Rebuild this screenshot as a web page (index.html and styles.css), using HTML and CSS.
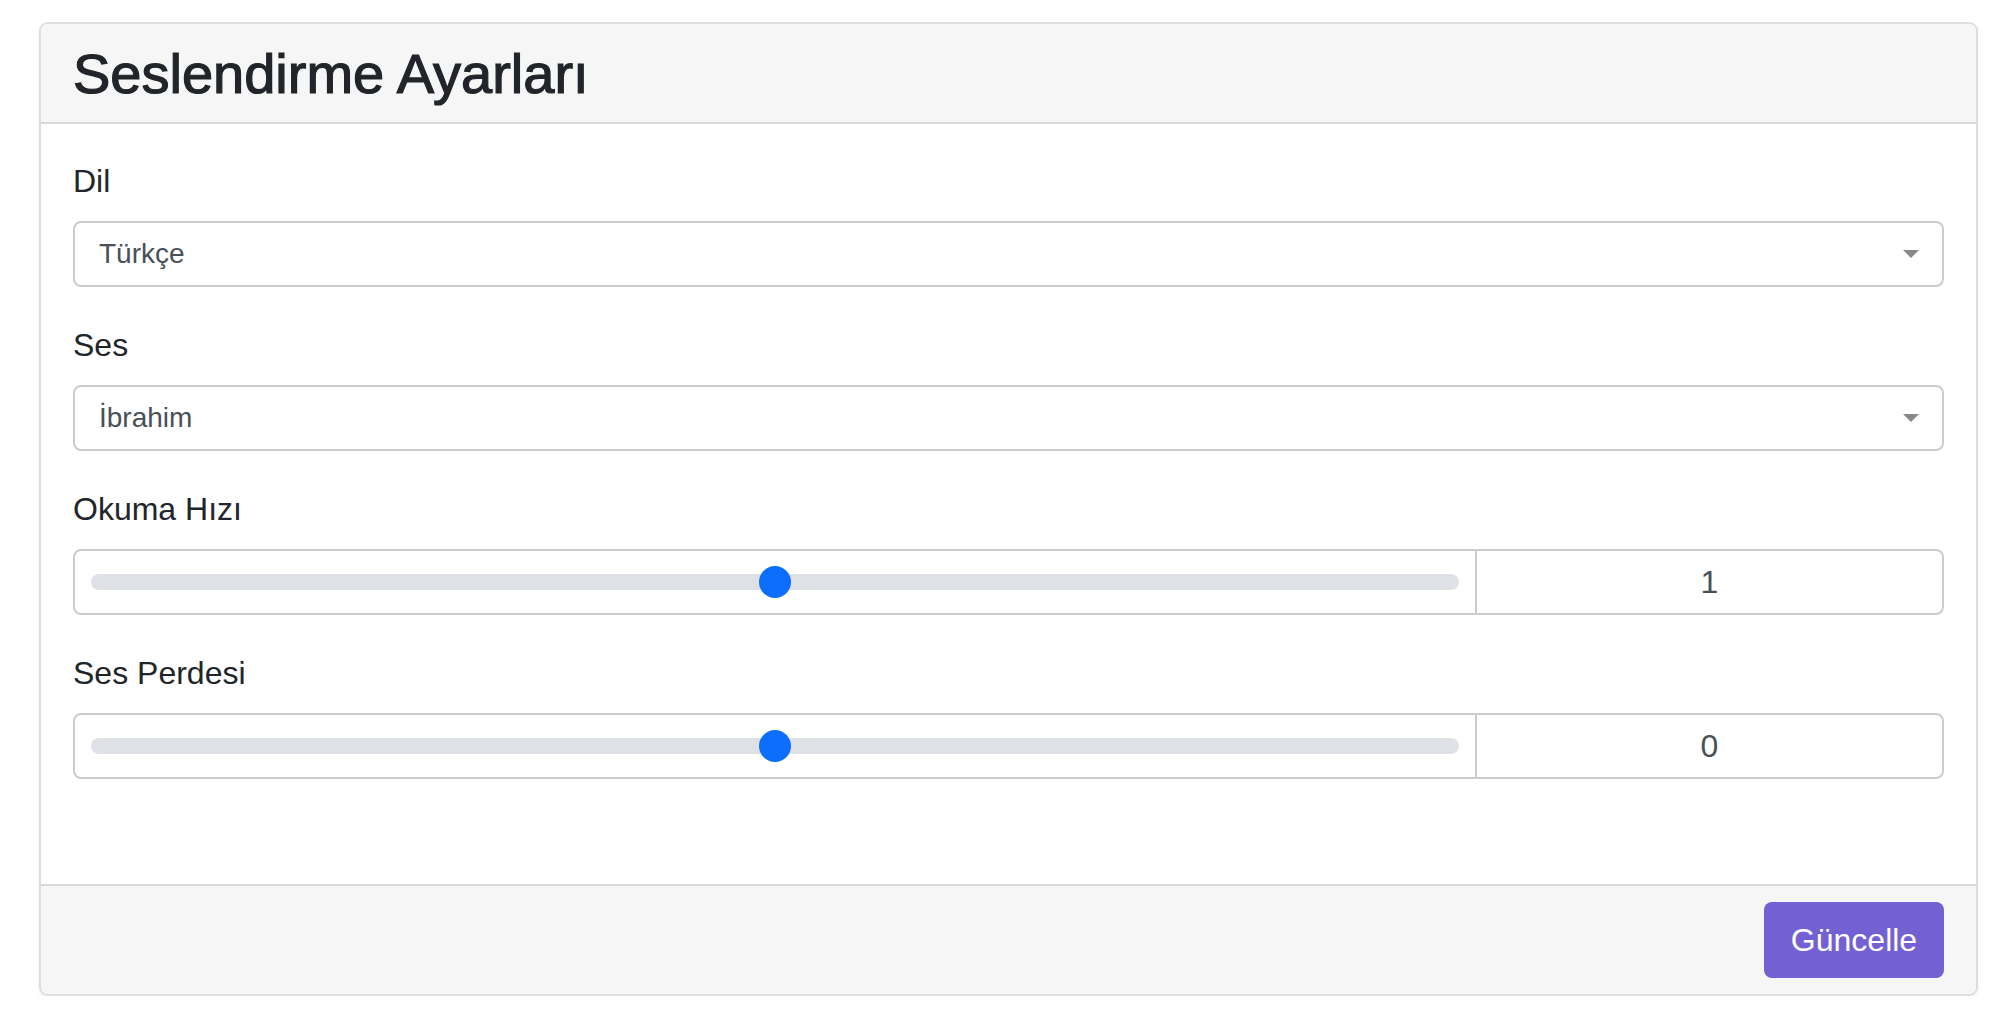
FILE: index.html
```html
<!DOCTYPE html>
<html lang="tr">
<head>
<meta charset="utf-8">
<title>Seslendirme Ayarları</title>
<link rel="stylesheet" href="styles.css">
</head>
<body>
<div class="page">
  <div class="card">
    <div class="card-header">
      <h3 class="card-title">Seslendirme Ayarları</h3>
    </div>
    <div class="card-body">
      <div class="form-group">
        <label class="form-label">Dil</label>
        <div class="select">
          <span class="select-value">Türkçe</span>
          <span class="select-arrow"></span>
        </div>
      </div>
      <div class="form-group">
        <label class="form-label">Ses</label>
        <div class="select">
          <span class="select-value">İbrahim</span>
          <span class="select-arrow"></span>
        </div>
      </div>
      <div class="form-group">
        <label class="form-label">Okuma Hızı</label>
        <div class="range-group">
          <div class="range-cell">
            <input class="range" type="range" min="0" max="2" step="0.1" value="1">
          </div>
          <div class="number-cell">1</div>
        </div>
      </div>
      <div class="form-group">
        <label class="form-label">Ses Perdesi</label>
        <div class="range-group">
          <div class="range-cell">
            <input class="range" type="range" min="-10" max="10" step="1" value="0">
          </div>
          <div class="number-cell">0</div>
        </div>
      </div>
    </div>
    <div class="card-footer">
      <button class="btn-update" type="button">Güncelle</button>
    </div>
  </div>
</div>
</body>
</html>
```

FILE: styles.css
```css
* {
  box-sizing: border-box;
}

html, body {
  margin: 0;
  padding: 0;
  background: #ffffff;
}

body {
  font-family: "Liberation Sans", Arial, sans-serif;
  color: #212529;
}

.page {
  padding: 22px 28px 0 39px;
}

.card {
  border: 2px solid #dedede;
  border-radius: 9px;
  box-shadow: 0 2px 4px rgba(0, 0, 0, 0.06);
  overflow: hidden;
  background: #ffffff;
}

.card-header {
  background: #f6f6f6;
  border-bottom: 2px solid #d9d9d9;
  padding: 16px 32px 15px;
}

.card-title {
  margin: 0;
  font-size: 56px;
  line-height: 67px;
  font-weight: 500;
  color: #212529;
  -webkit-text-stroke: 1.2px #212529;
}

.card-body {
  padding: 33px 32px 71px;
}

.form-group {
  margin-bottom: 34px;
}

.form-label {
  display: block;
  font-size: 32px;
  line-height: 48px;
  margin-bottom: 16px;
  color: #212529;
}

.select {
  height: 66px;
  border: 2px solid #cccccc;
  border-radius: 8px;
  display: flex;
  align-items: center;
  justify-content: space-between;
  padding: 0 23px 0 24px;
  background: #ffffff;
}

.select-value {
  font-size: 28px;
  color: #495057;
}

.select-arrow {
  width: 0;
  height: 0;
  border-left: 8px solid transparent;
  border-right: 8px solid transparent;
  border-top: 8px solid #888888;
}

.range-group {
  display: flex;
  height: 66px;
  border: 2px solid #cccccc;
  border-radius: 8px;
  overflow: hidden;
}

.range-cell {
  flex: 1;
  display: flex;
  align-items: center;
  padding: 0 16px;
}

.range {
  -webkit-appearance: none;
  appearance: none;
  width: 100%;
  height: 32px;
  margin: 0;
  padding: 0;
  background: transparent;
}

.range::-webkit-slider-runnable-track {
  height: 16px;
  border-radius: 8px;
  background: #dee2e6;
}

.range::-webkit-slider-thumb {
  -webkit-appearance: none;
  appearance: none;
  width: 32px;
  height: 32px;
  margin-top: -8px;
  border-radius: 50%;
  border: none;
  background: #0d6efd;
}

.number-cell {
  width: 467px;
  border-left: 2px solid #cccccc;
  display: flex;
  align-items: center;
  justify-content: center;
  font-size: 32px;
  color: #495057;
}

.card-footer {
  background: #f6f6f6;
  border-top: 2px solid #d9d9d9;
  padding: 16px 32px 16px;
  display: flex;
  justify-content: flex-end;
}

.btn-update {
  height: 76px;
  width: 180px;
  border: none;
  border-radius: 8px;
  background: #7360d2;
  color: #ffffff;
  font-family: "Liberation Sans", Arial, sans-serif;
  font-size: 32px;
  padding: 0;
}
```
